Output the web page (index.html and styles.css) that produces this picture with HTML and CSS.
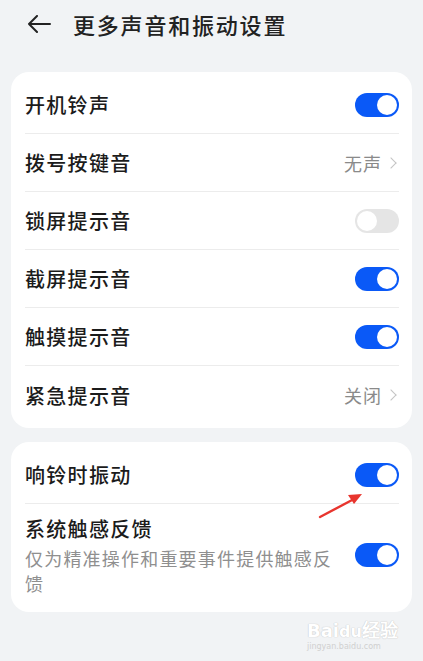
FILE: index.html
```html
<!DOCTYPE html>
<html lang="zh-CN">
<head>
    <meta charset="UTF-8">
    <meta name="viewport" content="width=device-width, initial-scale=1">
    <title>更多声音和振动设置</title>
    <link rel="stylesheet" href="styles.css">
</head>
<body>
    <div class="page">
        <div class="header">
            <svg class="back" width="24" height="18" viewBox="0 0 24 18">
                <path d="M23 9H2M10 1L2 9l8 8" fill="none" stroke="#222" stroke-width="2" stroke-linecap="round" stroke-linejoin="round"/>
            </svg>
            <h1>更多声音和振动设置</h1>
        </div>

        <div class="card">
            <div class="row">
                <span class="label">开机铃声</span>
                <span class="switch on"></span>
            </div>
            <div class="row">
                <span class="label">拨号按键音</span>
                <span class="value">无声<i class="chev"></i></span>
            </div>
            <div class="row">
                <span class="label">锁屏提示音</span>
                <span class="switch"></span>
            </div>
            <div class="row">
                <span class="label">截屏提示音</span>
                <span class="switch on"></span>
            </div>
            <div class="row">
                <span class="label">触摸提示音</span>
                <span class="switch on"></span>
            </div>
            <div class="row">
                <span class="label">紧急提示音</span>
                <span class="value">关闭<i class="chev"></i></span>
            </div>
        </div>

        <div class="card">
            <div class="row">
                <span class="label">响铃时振动</span>
                <span class="switch on"></span>
            </div>
            <div class="row tall">
                <div class="text">
                    <span class="label">系统触感反馈</span>
                    <span class="desc">仅为精准操作和重要事件提供触感反馈</span>
                </div>
                <span class="switch on"></span>
            </div>
        </div>
    </div>

    <!-- annotation arrow from the screenshot -->
    <svg class="mark" width="60" height="40" viewBox="0 0 60 40">
        <path d="M2 36L36 18" stroke="#e8352e" stroke-width="2.4" stroke-linecap="round"/>
        <path d="M44 13L30 14l6 9z" fill="#e8352e"/>
    </svg>
    <div class="watermark">Bai<b>du</b>经验<small>jingyan.baidu.com</small></div>
</body>
</html>
```

FILE: styles.css
```css
* {
    margin: 0; padding: 0;
    box-sizing: border-box;
}
html, body { height: 100%; }
body {
    background: #f1f3f5;
    color: #1b1b1b;
    font-family: "Noto Sans CJK SC", "Noto Sans", sans-serif;
    position: relative;
    overflow: hidden;
}
.page {
    padding: 0 11px 0 11px;
}
.header {
    display: flex;
    align-items: center;
    height: 48px;
    padding-left: 16px;
    margin-bottom: 24px;
}
.back {
    margin-right: 22px;
}
h1 {
    font-size: 22px;
    font-weight: 500;
    color: #222;
    letter-spacing: 1.8px;
}
.card {
    background: #fff;
    border-radius: 18px;
    padding: 4px 13px 4px 14px;
    margin-bottom: 14px;
}
.row {
    display: flex;
    align-items: center;
    justify-content: space-between;
    height: 58px;
    border-bottom: 1px solid #ececec;
}
.row:last-child { border-bottom: 0; }
.row.tall {
    height: auto;
    padding: 10px 0 12px;
}
.label {
    font-size: 20px;
    font-weight: 500;
    letter-spacing: 1.3px;
}
.text {
    display: flex;
    flex-direction: column;
    width: 318px;
}
.desc {
    font-size: 18px;
    color: #8f8f8f;
    line-height: 25px;
    letter-spacing: 1.2px;
    margin-top: 3px;
}
.value {
    display: flex;
    align-items: center;
    font-size: 18px;
    letter-spacing: 1px;
    color: #8a8a8a;
}
.chev {
    width: 8px; height: 8px;
    border-top: 1.3px solid #c4c4c4;
    border-right: 1.3px solid #c4c4c4;
    transform: rotate(45deg);
    margin: 0 4px 0 5px;
}
.switch {
    position: relative;
    width: 44px; height: 24px;
    border-radius: 12px;
    background: #e5e5e5;
    flex-shrink: 0;
}
.switch::after {
    content: "";
    position: absolute;
    top: 2px; left: 2px;
    width: 20px; height: 20px;
    border-radius: 50%;
    background: #fff;
}
.switch.on { background: #0a59f7; }
.switch.on::after {
    left: 22px;
}
.mark {
    position: absolute;
    left: 318px; top: 481px;
}
.watermark {
    position: absolute;
    left: 307px; top: 616px;
    font-family: "DejaVu Sans", sans-serif;
    font-size: 18px;
    font-weight: bold;
    color: #fff;
    text-shadow: 0 0 1px #c9c9c9, 0 0 1px #c9c9c9;
}
.watermark b { font-size: 16px; }
.watermark small {
    display: block;
    font-size: 8px;
    font-weight: normal;
    color: #d0d0d0;
    text-shadow: none;
}
```
